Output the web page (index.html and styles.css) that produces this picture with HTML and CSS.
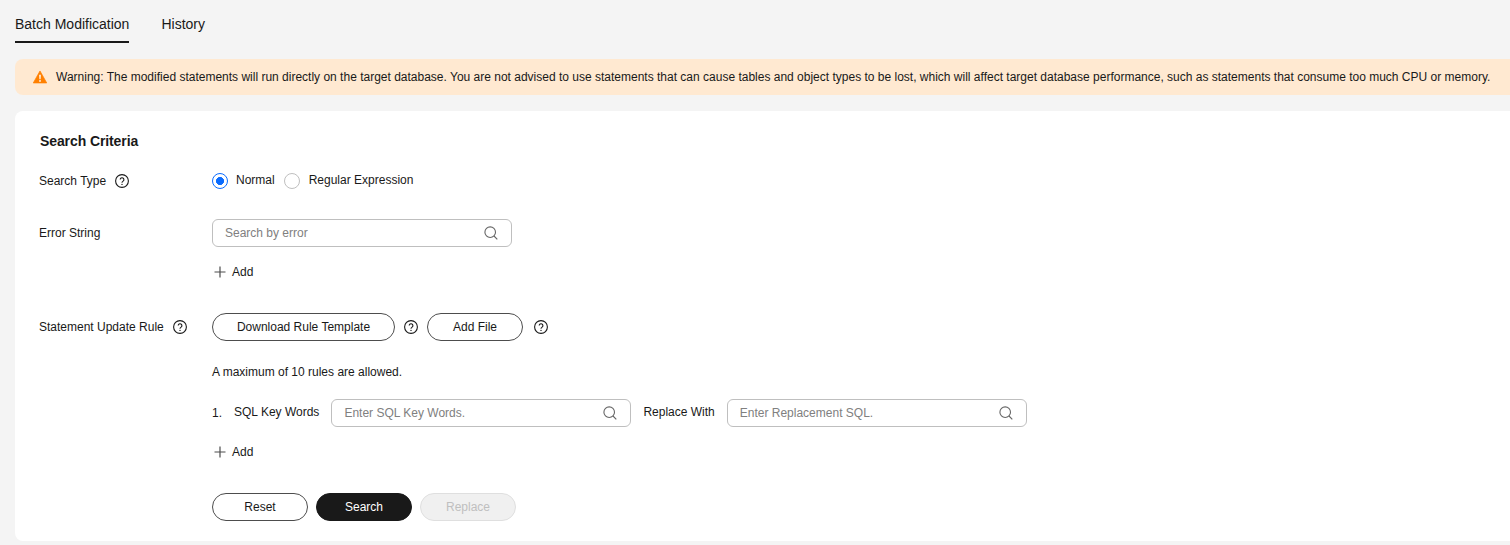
FILE: index.html
```html
<!DOCTYPE html>
<html lang="en">
<head>
<meta charset="utf-8">
<title>Batch Modification</title>
<link rel="stylesheet" href="styles.css">
</head>
<body>
<svg class="defs" width="0" height="0" aria-hidden="true">
  <defs>
    <symbol id="help" viewBox="0 0 14 14">
      <circle cx="7" cy="7" r="6.4" fill="none" stroke="currentColor" stroke-width="1.1"/>
      <path d="M5.2 5.6a1.85 1.85 0 1 1 2.9 1.5c-.7.5-1.1.8-1.1 1.6" fill="none" stroke="currentColor" stroke-width="1.1"/>
      <circle cx="7" cy="10.4" r=".7" fill="currentColor"/>
    </symbol>
    <symbol id="search" viewBox="0 0 14 14">
      <circle cx="6.2" cy="6.2" r="5.3" fill="none" stroke="currentColor" stroke-width="1.1"/>
      <path d="M10 10l3.3 3.3" fill="none" stroke="currentColor" stroke-width="1.1"/>
    </symbol>
    <symbol id="plus" viewBox="0 0 12 12">
      <path d="M6 .5v11M.5 6h11" fill="none" stroke="currentColor" stroke-width="1.2"/>
    </symbol>
  </defs>
</svg>
<div class="page">
  <nav class="tabs">
    <a class="tab tab-active">Batch Modification</a>
    <a class="tab">History</a>
  </nav>
  <div class="alert">
    <svg class="alert-icon" viewBox="0 0 16 15" aria-hidden="true">
      <path d="M8 .6 15.7 14.3H.3z" fill="#ff8000" stroke="#ff8000" stroke-width=".8" stroke-linejoin="round"/>
      <path d="M7.1 5h1.8l-.25 5.2H7.35z" fill="#fff"/>
      <circle cx="8" cy="12" r="1" fill="#fff"/>
    </svg>
    <span>Warning: The modified statements will run directly on the target database. You are not advised to use statements that can cause tables and object types to be lost, which will affect target database performance, such as statements that consume too much CPU or memory.</span>
  </div>
  <section class="card">
    <h2 class="card-title">Search Criteria</h2>
    <div class="row row-type">
      <div class="label">Search Type<svg class="help"><use href="#help"/></svg></div>
      <div class="radios">
        <span class="radio radio-on"></span><span class="radio-text radio-text-first">Normal</span>
        <span class="radio"></span><span class="radio-text radio-text-last">Regular Expression</span>
      </div>
    </div>
    <div class="row row-error">
      <div class="label">Error String</div>
      <div class="control">
        <div class="input"><span class="placeholder">Search by error</span><svg class="search"><use href="#search"/></svg></div>
        <div class="add"><svg class="plus"><use href="#plus"/></svg>Add</div>
      </div>
    </div>
    <div class="row row-rule">
      <div class="label">Statement Update Rule<svg class="help"><use href="#help"/></svg></div>
      <div class="control">
        <div class="rule-actions">
          <button class="btn btn-download">Download Rule Template</button>
          <svg class="help help-btn"><use href="#help"/></svg>
          <button class="btn btn-file">Add File</button>
          <svg class="help help-btn"><use href="#help"/></svg>
        </div>
        <p class="note">A maximum of 10 rules are allowed.</p>
        <div class="rule">
          <span class="rule-no">1.</span>
          <span class="rule-label">SQL Key Words</span>
          <div class="input"><span class="placeholder">Enter SQL Key Words.</span><svg class="search"><use href="#search"/></svg></div>
          <span class="rule-label rule-with">Replace With</span>
          <div class="input"><span class="placeholder">Enter Replacement SQL.</span><svg class="search"><use href="#search"/></svg></div>
        </div>
        <div class="add"><svg class="plus"><use href="#plus"/></svg>Add</div>
        <div class="actions">
          <button class="btn btn-action">Reset</button>
          <button class="btn btn-action btn-primary">Search</button>
          <button class="btn btn-action btn-disabled">Replace</button>
        </div>
      </div>
    </div>
  </section>
</div>
</body>
</html>
```
FILE: styles.css
```css
* { box-sizing: border-box; }
html, body { margin: 0; height: 100%; }
body {
  background: #f4f4f4;
  color: #191919;
  font-family: "Liberation Sans", Arial, sans-serif;
  font-size: 12px;
  overflow: hidden;
}
.defs { position: absolute; }
.page { width: 1540px; padding-left: 15px; }

.tabs { display: flex; gap: 32px; height: 43px; }
.tab {
  font-size: 14px;
  line-height: 16px;
  padding-top: 16px;
  height: 43px;
  color: #191919;
}
.tab-active { border-bottom: 2px solid #191919; }

.alert {
  margin-top: 16px;
  height: 36px;
  display: flex;
  align-items: center;
  padding-left: 18px;
  gap: 9px;
  background: #ffe9d1;
  border-radius: 8px;
  white-space: nowrap;
}
.alert-icon { width: 14px; height: 14px; flex: none; }

.card {
  margin-top: 16px;
  height: 430px;
  padding: 22px 24px 0;
  background: #fff;
  border-radius: 8px;
}
.card-title {
  margin: 0 0 0 1px;
  font-size: 14px;
  line-height: 16px;
  font-weight: 700;
  letter-spacing: -0.1px;
}

.row { display: grid; grid-template-columns: 173px 1fr; }
.row-type { margin-top: 22px; height: 20px; align-items: center; }
.row-error { margin-top: 28px; }
.row-rule { margin-top: 33px; }
.label { display: flex; align-items: center; height: 28px; }
.row-type .label { height: 20px; }
.help { width: 14px; height: 14px; margin-left: 9px; flex: none; color: #191919; }
.help-btn { margin-left: 0; }

.radios { display: flex; align-items: center; }
.radio {
  width: 16px;
  height: 16px;
  border: 1px solid #bfbfbf;
  border-radius: 50%;
  background: #fff;
  flex: none;
}
.radio-on {
  border-color: #0a6cff;
  background: radial-gradient(circle, #0a6cff 0 3.75px, #fff 4.25px);
}
.radio-text { position: relative; top: -1px; }
.radio-text-first { margin: 0 9px 0 8px; }
.radio-text-last { margin-left: 9px; }

.input {
  width: 300px;
  height: 28px;
  border: 1px solid #bfbfbf;
  border-radius: 6px;
  display: flex;
  align-items: center;
  justify-content: space-between;
  padding: 0 13px 0 12px;
  background: #fff;
  flex: none;
}
.placeholder { color: #808080; }
.search { width: 14px; height: 14px; color: #666; }

.add { display: flex; align-items: center; gap: 6px; height: 16px; margin-top: 17px; line-height: 16px; }
.plus { width: 12px; height: 12px; color: #4d4d4d; margin-left: 2px; }

.rule-actions { display: flex; align-items: center; gap: 9px; }
.btn {
  height: 28px;
  padding: 0;
  border: 1px solid #4d4d4d;
  border-radius: 14px;
  background: #fff;
  color: #191919;
  font: inherit;
}
.btn-download { width: 183px; }
.btn-file { width: 96px; }
.btn-file + .help { margin-left: 2px; }

.note { margin: 23px 0 0; line-height: 16px; height: 16px; }

.rule { display: flex; align-items: center; margin-top: 19px; height: 28px; }
.rule-no { width: 22px; }
.rule-label { margin-right: 12px; position: relative; top: -1px; }
.rule-with { margin: 0 12px 0 12px; }

.row-rule .add { margin-top: 17px; }

.actions { display: flex; gap: 8px; margin-top: 33px; }
.btn-action { width: 96px; }
.btn-primary { background: #191919; border-color: #191919; color: #fff; }
.btn-disabled { background: #f0f0f0; border-color: #dfdfdf; color: #bfbfbf; }
```
